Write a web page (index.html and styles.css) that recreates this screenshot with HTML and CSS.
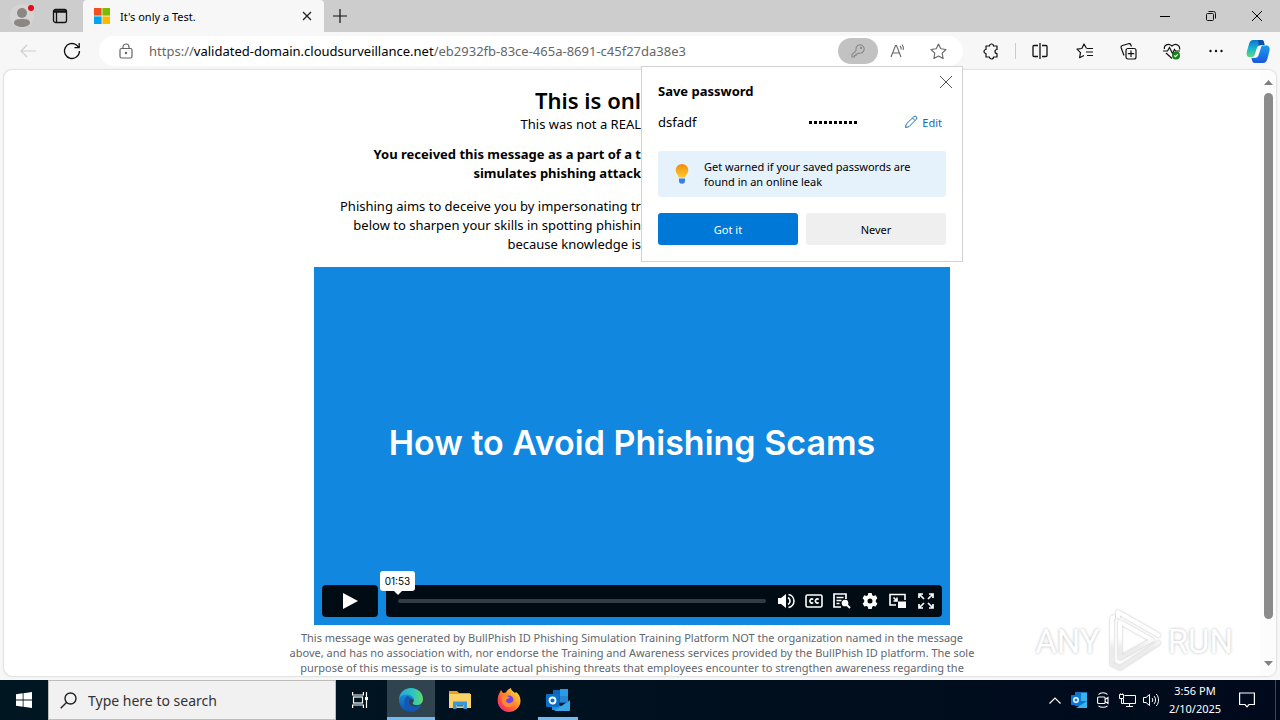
FILE: index.html
```html
<!DOCTYPE html>
<html lang="en">
<head>
<meta charset="UTF-8" />
<meta name="viewport" content="width=device-width, initial-scale=1" />
<title>It's only a Test.</title>
<link rel="stylesheet" href="styles.css">
</head>
<body>
  <header class="titlebar">
    <button class="profile-btn" aria-label="Profile">
      <svg width="28" height="28" viewBox="0 0 28 28"><circle cx="14" cy="14" r="12" fill="#d6d4d2"/><circle cx="14" cy="11" r="5" fill="#8b8784"/><path d="M6 21c0-3.500 3-4 8-4s8 .5 8 4c0 2-4 4-8 4s-8-2-8-4z" fill="#8b8784"/><circle cx="23" cy="6" r="3" fill="#e00b1c"/></svg>
    </button>
    <button class="tab-menu-btn" aria-label="Tab actions">
      <svg width="16" height="16" viewBox="0 0 16 16" fill="none" stroke="#111" stroke-width="1.3"><rect x="1.5" y="1.5" width="13" height="13" rx="2"/><path d="M1.5 3h13M1.5 4.2h13M4.5 4.5v10" /></svg>
    </button>
    <div class="tab">
      <svg width="16" height="16" viewBox="0 0 16 16"><path fill="#f25022" d="M0 0h7.6v7.6H0z"/><path fill="#7fba00" d="M8.4 0H16v7.6H8.4z"/><path fill="#00a4ef" d="M0 8.4h7.6V16H0z"/><path fill="#ffb900" d="M8.4 8.4H16V16H8.4z"/></svg>
      <span class="tab-title">It's only a Test.</span>
      <button class="tab-close" aria-label="Close tab"><svg width="10" height="10" viewBox="0 0 10 10" stroke="#222" stroke-width="1.3"><path d="M1 1l8 8M9 1l-8 8"/></svg></button>
    </div>
    <button class="new-tab" aria-label="New tab"><svg width="14" height="14" viewBox="0 0 14 14" stroke="#111" stroke-width="1.2"><path d="M7 0v14M0 7h14"/></svg></button>
    <div class="window-btns">
      <button aria-label="Minimize"><svg width="10" height="10" viewBox="0 0 10 10" stroke="#000"><path d="M0 5.5h10"/></svg></button>
      <button aria-label="Restore"><svg width="12" height="12" viewBox="0 0 12 12" fill="none" stroke="#111"><rect x="1.5" y="3.5" width="7" height="7" rx="1"/><path d="M3.5 1.5h5a2 2 0 0 1 2 2v5"/></svg></button>
      <button aria-label="Close"><svg width="12" height="12" viewBox="0 0 12 12" stroke="#000"><path d="M1 1l10 10M11 1L1 11"/></svg></button>
    </div>
  </header>

  <nav class="toolbar">
    <button class="tool-btn" aria-label="Back" disabled><svg width="16" height="14" viewBox="0 0 16 14" fill="none" stroke="#cfcfcf" stroke-width="1.2"><path d="M16 7H1M7 1L1 7l6 6"/></svg></button>
    <button class="tool-btn" aria-label="Refresh"><svg width="18" height="18" viewBox="0 0 18 18" fill="none" stroke="#111" stroke-width="1.3"><path d="M16.500 9A7.500 7.500 0 1 1 13.500 3l2.500 2.500M16.200 1v4.700h-4.700"/></svg></button>
    <div class="address-wrap">
      <div class="address-bar">
        <svg width="14" height="16" viewBox="0 0 14 16" fill="none" stroke="#666" stroke-width="1.2"><rect x="1" y="5.500" width="12" height="9.500" rx="1.500"/><path d="M4 5.500V4a3 3 0 0 1 6 0v1.500"/><circle cx="7" cy="10" r=".6" fill="#666"/></svg>
        <div class="url">https://<b>validated-domain.cloudsurveillance.net</b>/eb2932fb-83ce-465a-8691-c45f27da38e3</div>
        <button class="addr-btn key-btn" aria-label="Passwords"><svg width="14" height="14" viewBox="0 0 14 14" fill="none" stroke="#888" stroke-width="1.100"><path d="M9 .8a4.200 4.200 0 1 1-1.300 8.200L6.500 10H5v1.500H3.500V13H1v-2.500l4.200-4.200A4.200 4.200 0 0 1 9 .8z"/><circle cx="10" cy="4" r=".6"/></svg></button>
        <button class="addr-btn" aria-label="Read aloud"><svg width="16" height="16" viewBox="0 0 16 16" fill="none" stroke="#666" stroke-width="1.100"><path d="M1 14L5.500 2.500h1L11 14M2.600 10h6.800M10 3c1 1 1.300 2.300 1.100 3.600M12 1.500c1.300 1.500 1.700 3.500 1.300 5.300"/></svg></button>
        <button class="addr-btn" aria-label="Add to favorites"><svg width="17" height="17" viewBox="0 0 17 17" fill="none" stroke="#666" stroke-width="1.100" stroke-linejoin="round"><path d="M8.500 1l2.300 4.800 5.200.7-3.800 3.700.9 5.300-4.600-2.500-4.600 2.500.9-5.300L1 6.500l5.200-.7z"/></svg></button>
      </div>

      <section class="password-popup">
        <button class="popup-close" aria-label="Close"><svg width="12" height="12" viewBox="0 0 12 12" stroke="#555"><path d="M0 0l12 12M12 0L0 12"/></svg></button>
        <h2>Save password</h2>
        <div class="credentials">
          <span class="user">dsfadf</span>
          <span class="dots"><i></i><i></i><i></i><i></i><i></i><i></i><i></i><i></i><i></i><i></i></span>
          <button class="edit-btn"><svg width="14" height="14" viewBox="0 0 14 14" fill="none" stroke="#1a72bd"><path d="M1.500 12.500l.8-3.500 7.500-7.300a1.600 1.600 0 0 1 2.500 2.500L5 11.700zM8.500 3l2.500 2.500"/></svg>Edit</button>
        </div>
        <div class="leak-tip">
          <svg width="14" height="20" viewBox="0 0 14 20"><defs><linearGradient id="bulb" x2="0" y2="1"><stop stop-color="#f28a0c"/><stop offset="1" stop-color="#ffcb2e"/></linearGradient></defs><path fill="url(#bulb)" d="M7 0a6.300 6.300 0 0 1 6.300 6.300c0 3.200-2.600 4.300-3 7.200H3.700C3.300 10.600.7 9.500.7 6.300A6.300 6.300 0 0 1 7 0z"/><path fill="#3d7be5" d="M4 14.500h6v2.200a3 3 0 0 1-6 0z"/></svg>
          <p>Get warned if your saved passwords are found in an online leak</p>
        </div>
        <div class="popup-actions">
          <button class="primary">Got it</button>
          <button>Never</button>
        </div>
      </section>
    </div>
    <button class="tool-btn" aria-label="Extensions"><svg width="17" height="17" viewBox="0 0 17 17" fill="none" stroke="#111" stroke-width="1.200" stroke-linejoin="round"><path d="M3 3h3.500a2 2 0 0 1 4 0H14v3.500a1.900 1.900 0 0 0 0 4V14h-3.500a2 2 0 0 1-4 0H3v-3.500a2 2 0 1 1 0-4z"/></svg></button>
    <span class="tool-sep"></span>
    <button class="tool-btn" aria-label="Split screen"><svg width="16" height="16" viewBox="0 0 16 16" fill="none" stroke="#111" stroke-width="1.300"><path d="M6 2.500H2a1 1 0 0 0-1 1v9a1 1 0 0 0 1 1h4M10 2.500h4a1 1 0 0 1 1 1v9a1 1 0 0 1-1 1h-4M8 0v16"/></svg></button>
    <button class="tool-btn" aria-label="Favorites"><svg width="17" height="16" viewBox="0 0 17 16" fill="none" stroke="#111" stroke-width="1.200" stroke-linejoin="round"><path d="M10.500 5.500L8 1 5.800 5.500 1 6.200l3.500 3.500-.9 5L8 12.500M11 5.500h6M10 9h7M11 12.500h6"/></svg></button>
    <button class="tool-btn" aria-label="Collections"><svg width="17" height="17" viewBox="0 0 17 17" fill="none" stroke="#111" stroke-width="1.200"><rect x="6" y="5.500" width="10" height="10.500" rx="2"/><path d="M11 7.500v6.500M7.800 10.700h6.400M4 12.500L1.200 5a2 2 0 0 1 1.200-2.500l6-1.800a2 2 0 0 1 2.500 1.300l.5 1.500"/></svg></button>
    <button class="tool-btn" aria-label="Browser essentials"><svg width="18" height="17" viewBox="0 0 18 17" fill="none" stroke="#111" stroke-width="1.200"><path d="M1.500 6C.5 2.500 5-.5 9 3c4-3.500 8.500-.5 7.500 3.500M0 8h4.500L6.500 4.500l3 6 2-4 1 1.500H17M3 10l6 5.500"/><circle cx="13" cy="12.500" r="4" fill="#138013" stroke="none"/><path stroke="#fff" d="M11.200 12.500l1.300 1.200 2.300-2.400"/></svg></button>
    <button class="tool-btn" aria-label="Settings and more"><svg width="14" height="4" viewBox="0 0 14 4" fill="#111"><circle cx="1.500" cy="2" r="1.200"/><circle cx="7" cy="2" r="1.200"/><circle cx="12.500" cy="2" r="1.200"/></svg></button>
    <button class="tool-btn copilot-btn" aria-label="Copilot">
      <svg width="24" height="23" viewBox="0 0 24 23"><defs><linearGradient id="cpA" x2="0" y2="1"><stop stop-color="#0c73d4"/><stop offset=".5" stop-color="#16b6cd"/><stop offset="1" stop-color="#63d77b"/></linearGradient><linearGradient id="cpB" x2="0" y2="1"><stop stop-color="#1c9cea"/><stop offset="1" stop-color="#1a58e4"/></linearGradient></defs><path fill="url(#cpA)" d="M7 0h8c3 0 3 2 3.500 5h-3c-3 0-4 1-5 4l-2 6.500C8 17 7 17 5 17H4c-3 0-4-2-3-6l2-7C4 1 5 0 7 0z"/><path fill="url(#cpB)" d="M17 5.500h3c3 0 4 2 3.500 5l-2 8c-1 3-2 4.500-4.500 4.500H9c-2.500 0-3-2-3.500-5H8c3 0 4-1 5-4l2-6.500c.4-1.500.8-2 2-2z"/><path fill="#0e4fa8" d="M12 0h3c3 0 3 2 3.500 5h-3c-1 0-2 .2-2.700.7z"/></svg>
    </button>
  </nav>

  <main class="viewport">
    <article class="content">
      <div class="intro">
        <h1>This is onl</h1>
        <p>This was not a REAL</p>
        <p class="notice">You received this message as a part of a t<br>simulates phishing attack</p>
        <p class="about">Phishing aims to deceive you by impersonating tr<br>below to sharpen your skills in spotting phishin<br>because knowledge is</p>
      </div>

      <div class="video">
        <div class="video-title">How to Avoid Phishing Scams</div>
        <div class="controls">
          <button class="play" aria-label="Play"><svg width="16" height="16" viewBox="0 0 16 16"><path fill="#fff" d="M1 0l15 8-15 8z"/></svg></button>
          <div class="control-bar">
            <span class="time-tip">01:53</span>
            <input class="seek" type="range" min="0" max="113" value="0" aria-label="Seek">
            <button aria-label="Volume"><svg width="18" height="16" viewBox="0 0 18 16" fill="none" stroke="#fff" stroke-width="1.600"><path fill="#fff" stroke="none" d="M1 5h3l5-4v14l-5-4H1z"/><path d="M11 4.500a4 4 0 0 1 0 7M11.500 1.500a6.600 6.600 0 0 1 0 13"/></svg></button>
            <button aria-label="Captions"><svg width="18" height="14" viewBox="0 0 18 14" fill="none" stroke="#fff" stroke-width="1.600"><rect x="1" y="1" width="16" height="12" rx="1.500"/><path d="M8.200 5.500a2 2 0 1 0 0 3M13.700 5.500a2 2 0 1 0 0 3"/></svg></button>
            <button aria-label="Transcript"><svg width="18" height="16" viewBox="0 0 18 16" fill="none" stroke="#fff" stroke-width="1.700"><path d="M8 14H1V1h12v5M3.500 4.500h7M3.500 7.500h5M3.500 10.500h3"/><circle cx="12" cy="10" r="2.500" fill="#fff"/><path stroke-width="2" d="M13 11l4 4"/></svg></button>
            <button aria-label="Settings"><svg width="16" height="16" viewBox="0 0 16 16"><path fill="#fff" fill-rule="evenodd" d="M6.300 0h3.400l.5 2.200 1.300.8 2.200-.8 1.700 3L13.800 7v2l1.600 1.600-1.700 3-2.200-.7-1.300.8-.5 2.300H6.300l-.5-2.300-1.300-.8-2.200.7-1.700-3L2.200 9V7L.6 5.200l1.700-3 2.200.8 1.300-.8zM8 5.500a2.500 2.500 0 1 0 0 5 2.500 2.500 0 0 0 0-5z"/></svg></button>
            <button aria-label="Picture in picture"><svg width="18" height="16" viewBox="0 0 18 16" fill="none" stroke="#fff" stroke-width="1.600"><path d="M7 12H1V1.500h15V7M4.500 4.500l3 3M8 4.500v3.500H4.500"/><path fill="#fff" stroke="none" d="M9 8.500h8V15H9z"/></svg></button>
            <button aria-label="Fullscreen"><svg width="16" height="16" viewBox="0 0 16 16" fill="none" stroke="#fff" stroke-width="1.700"><path d="M1 5V1h4M11 1h4v4M15 11v4h-4M5 15H1v-4M1 1l5 5M15 1l-5 5M15 15l-5-5M1 15l5-5"/></svg></button>
          </div>
        </div>
      </div>

      <p class="disclaimer">This message was generated by BullPhish ID Phishing Simulation Training Platform NOT the organization named in the message<br>above, and has no association with, nor endorse the Training and Awareness services provided by the BullPhish ID platform. The sole<br>purpose of this message is to simulate actual phishing threats that employees encounter to strengthen awareness regarding the</p>
    </article>
    <div class="scrollbar">
      <svg width="9" height="5" viewBox="0 0 9 5"><path fill="#808080" d="M0 5l4.500-5L9 5z"/></svg>
      <span class="thumb"></span>
      <svg width="9" height="5" viewBox="0 0 9 5"><path fill="#808080" d="M0 0h9L4.500 5z"/></svg>
    </div>
    <div class="watermark">
      <span>ANY</span>
      <svg width="60" height="66" viewBox="0 0 60 66" fill="none" stroke-width="4" stroke-linejoin="round"><defs><linearGradient id="wm" gradientUnits="userSpaceOnUse" x1="0" y1="0" x2="0" y2="66"><stop offset=".45" stop-color="#fff"/><stop offset=".6" stop-color="#ececec"/></linearGradient></defs><g stroke="url(#wm)"><path d="M16 14v36l32-18z"/><path d="M8 58V12c0-2 1-3 3-3M14 10V4l42 24M56 34L16 60l-6-3"/></g></svg>
      <span>RUN</span>
    </div>
  </main>

  <footer class="taskbar">
    <button class="start" aria-label="Start"><svg width="16" height="16" viewBox="0 0 16 16" fill="#fff"><path d="M0 2.300L6.700 1.300v6.300H0zM7.500 1.200L16 0v7.600H7.500zM0 8.400h6.700v6.300L0 13.700zM7.500 8.400H16V16l-8.500-1.200z"/></svg></button>
    <label class="search">
      <svg width="17" height="17" viewBox="0 0 17 17" fill="none" stroke="#222" stroke-width="1.400"><circle cx="10.500" cy="6.500" r="5.500"/><path d="M6.500 10.500L.7 16.300"/></svg>
      <input type="text" placeholder="Type here to search" aria-label="Search">
    </label>
    <div class="apps">
      <button aria-label="Task view"><svg width="17" height="16" viewBox="0 0 17 16" fill="none" stroke="#fff" stroke-width="1.200"><path d="M.6 0v3h10.800V0M.6 16v-3h10.800v3M14.500 0v16"/><rect x="1.500" y="5" width="9" height="6"/><path fill="#fff" stroke="none" d="M13 5h3v3h-3z"/></svg></button>
      <button class="active" aria-label="Edge"><svg width="24" height="24" viewBox="0 0 24 24"><defs><linearGradient id="edgeA"><stop stop-color="#2aa5dd"/><stop offset=".6" stop-color="#2fc6bd"/><stop offset="1" stop-color="#64d867"/></linearGradient><linearGradient id="edgeB" x2="0" y2="1"><stop stop-color="#1c8fd8"/><stop offset="1" stop-color="#0d4fa5"/></linearGradient></defs><path fill="url(#edgeB)" d="M0 12c0-5 5-7 9-6 4 0 6 3 6 6-4-3-6 0-5 3 1 4 7 5 12 2-2 4-6 7-10 7C5 24 0 19 0 12z"/><path fill="#1657b4" d="M8 8c-5 4-3 14 5 15.800C18 23 21 20 22 17c-5 3-11 2-12-2-1-2 0-4 2-4-1-2-2-3-4-3z"/><path fill="url(#edgeA)" d="M0 12C0 5 5 0 12 0s12 5 12 11c0 4-3 6-6 6-4 0-5-1-4-2.500 3-4-2-8.500-7-8-4 .3-7 2.500-7 5.500z"/></svg></button>
      <button aria-label="File Explorer"><svg width="22" height="18" viewBox="0 0 22 18"><path fill="#e9a21c" d="M0 0h8l2 2h11v4H0z"/><path fill="#fdd368" d="M0 3h22v14H0z"/><path fill="#3b95d6" d="M4 10.500h14V18h-3.500v-4h-7v4H4z"/><path fill="#287cb8" d="M8 14h6v1.500H8z"/></svg></button>
      <button aria-label="Firefox"><svg width="24" height="24" viewBox="0 0 24 24"><defs><linearGradient id="fox" x1="1" x2="0" y2="1"><stop stop-color="#fff04a"/><stop offset=".4" stop-color="#ff9a2b"/><stop offset=".7" stop-color="#ff4a45"/><stop offset="1" stop-color="#e3189a"/></linearGradient></defs><path fill="url(#fox)" d="M2 6l2-4 2 3 3-.5C10 2 12 1 14 0c0 3 3 3.500 4 5l1-1c3 2 4.500 5 4.500 9C23.500 19 18 24 12 24S.7 19 .7 13C.7 10 1 8 2 6z"/><circle cx="12" cy="12" r="4.500" fill="#7543e5"/><path fill="#ff8a2d" d="M5 8c3-1 6 0 8 2-2 0-3 1-4 2 0 4 5 4 7 1 1 5-3 7-6 6-4-1-6-5-5-11z"/></svg></button>
      <button class="running" aria-label="Outlook"><svg width="24" height="22" viewBox="0 0 24 22"><path fill="#1066b5" d="M7 1h15v13H7z"/><path fill="#2a9be8" d="M14 0h8v7h-8z"/><path fill="#2b84d0" d="M14 7h8v6h-8z"/><path fill="#185fa8" d="M7 7h7v7H7z"/><path fill="#1c91dd" d="M6 13l9 4 9-6v10H6z"/><path fill="#3aa8e4" d="M8 22l16-10v9a1 1 0 0 1-1 1z"/><rect y="5" width="13" height="13" rx="1" fill="#0b6fc8"/><circle cx="6.500" cy="11.500" r="3" fill="none" stroke="#fff" stroke-width="1.800"/></svg></button>
    </div>
    <div class="tray">
      <button aria-label="Show hidden icons"><svg width="12" height="7" viewBox="0 0 12 7" fill="none" stroke="#fff" stroke-width="1.200"><path d="M.5 6.500L6 1l5.500 5.500"/></svg></button>
      <button aria-label="Outlook"><svg width="16" height="16" viewBox="0 0 16 16"><path fill="#1272c4" d="M4 0h12v14H4z"/><path fill="#35b4f0" d="M10 1h6v8h-6zM5 16l11-7v7z"/><rect y="3" width="10" height="10" rx="1" fill="#0a78d4"/><circle cx="5" cy="8" r="2.200" fill="none" stroke="#fff" stroke-width="1.400"/></svg></button>
      <button aria-label="Meet now"><svg width="12" height="16" viewBox="0 0 12 16" fill="none" stroke="#fff" stroke-width="1.100"><rect x=".6" y="5" width="7.500" height="6.500" rx="1"/><path d="M8 7.500l3-2v6l-3-2M1.500 2.500c2-2.300 7-2.300 9 0M1.500 13.800c2 2 7 2 9 0"/></svg></button>
      <button aria-label="Network"><svg width="17" height="15" viewBox="0 0 17 15" fill="none" stroke="#fff"><path d="M5.500 2.500h11v8h-12V6M10.500 10.500v3M7 13.500h7M2.500 5.500v5h2"/><path d="M.5 1.500h4v4h-4zM1.500.5v1M3.500.5v1"/></svg></button>
      <button aria-label="Volume"><svg width="17" height="14" viewBox="0 0 17 14" fill="none" stroke="#fff"><path d="M.5 4.500h2.500L6.500 1.500v11L3 9.500H.5zM9 5c1 1.200 1 2.800 0 4M11 3c2 2.300 2 5.700 0 8M13.300 1c3 3.500 3 8.500 0 12"/></svg></button>
      <div class="clock"><span>3:56 PM</span><span>2/10/2025</span></div>
      <button class="notify" aria-label="Notifications"><svg width="16" height="16" viewBox="0 0 16 16" fill="none" stroke="#fff" stroke-width="1.200"><path d="M.6 1h14.800v11.500H10L8 14.800l-2-2.300H.6z"/></svg></button>
      <span class="show-desktop"></span>
    </div>
  </footer>
</body>
</html>
```
FILE: styles.css
```css
* {
  box-sizing: border-box;
}
body {
  margin: 0;
  height: 100vh;
  display: flex;
  flex-direction: column;
  overflow: hidden;
  background: #f7f7f7;
  color: #000;
  font-family: "Noto Sans", "Open Sans", sans-serif;
  font-size: 11px;
}
button {
  display: flex;
  align-items: center;
  justify-content: center;
  padding: 0;
  border: none;
  background: none;
  color: inherit;
  font: inherit;
}
svg {
  flex: none;
}
h1, h2, p {
  margin: 0;
}

/* window title bar */
.titlebar {
  flex: none;
  display: flex;
  height: 32px;
  background: #cdcdcd;
}
.profile-btn {
  width: 44px;
}
.tab-menu-btn {
  width: 32px;
}
.tab {
  display: flex;
  align-items: center;
  width: 241px;
  margin-left: 7px;
  padding: 0 12px 0 11px;
  gap: 10px;
  background: #f7f7f7;
  border-radius: 4px 4px 0 0;
}
.tab-title {
  flex: 1;
}
.new-tab {
  width: 32px;
}
.window-btns {
  display: flex;
  margin-left: auto;
}
.window-btns button {
  width: 46px;
}

/* toolbar */
.toolbar {
  flex: none;
  display: flex;
  align-items: center;
  height: 38px;
  padding: 0 2px 0 6px;
}
.tool-btn {
  width: 44px;
  height: 32px;
}
.copilot-btn {
  width: 40px;
}
.tool-sep {
  width: 1px;
  height: 16px;
  margin: 0 2px;
  background: #ccc;
}
.address-wrap {
  position: relative;
  flex: 1;
  min-width: 0;
  margin: 0 6px 0 5px;
}
.address-bar {
  display: flex;
  align-items: center;
  height: 30px;
  padding: 0 5px 0 20px;
  background: #fff;
  border-radius: 15px;
}
.url {
  flex: 1;
  margin-left: 16px;
  color: #666;
  font-size: 13px;
  white-space: nowrap;
}
.url b {
  color: #000;
  font-weight: 400;
}
.addr-btn {
  width: 40px;
  height: 26px;
  border-radius: 13px;
}
.key-btn {
  background: #c2c2c2;
}

/* save password popup */
.password-popup {
  position: absolute;
  z-index: 2;
  top: 30px;
  right: 0;
  width: 322px;
  padding: 15px 16px 16px;
  background: #fff;
  border: 1px solid #d2d2d2;
}
.popup-close {
  position: absolute;
  top: 3px;
  right: 4px;
  width: 24px;
  height: 24px;
}
.password-popup h2 {
  font-size: 13px;
  line-height: 18px;
}
.credentials {
  display: flex;
  align-items: center;
  height: 44px;
  font-size: 13px;
}
.user {
  width: 151px;
}
.dots {
  display: flex;
  gap: 2px;
}
.dots i {
  width: 3px;
  height: 3px;
  background: #000;
}
.edit-btn {
  margin-left: auto;
  padding-right: 4px;
  gap: 4px;
  color: #0f69b6;
  font-size: 11px;
}
.leak-tip {
  display: flex;
  align-items: center;
  gap: 15px;
  margin-top: 7px;
  padding: 8px 17px;
  background: #e5f1fb;
  border-radius: 3px;
  line-height: 15px;
}
.popup-actions {
  display: flex;
  gap: 8px;
  margin-top: 16px;
}
.popup-actions button {
  flex: 1;
  height: 32px;
  background: #efefef;
  border-radius: 3px;
}
.popup-actions .primary {
  background: #0078d7;
  color: #fff;
}

/* page */
.viewport {
  position: relative;
  flex: 1;
  min-height: 0;
  display: flex;
  margin: 0 4px 4px;
  overflow: hidden;
  background: #fff;
  border-radius: 8px;
  box-shadow: 0 0 2px #aaa;
}
.content {
  flex: 1;
  padding-top: 15px;
}
.intro {
  width: 50%;
  margin-left: 9px;
  font-size: 13px;
  line-height: 19px;
  text-align: right;
}
.intro h1 {
  font-size: 22px;
  font-weight: 600;
  line-height: 30px;
}
.notice {
  margin-top: 11px;
  font-weight: 700;
}
.about {
  margin-top: 14px;
}
.video {
  display: flex;
  flex-direction: column;
  width: 636px;
  aspect-ratio: 16 / 9;
  margin: 13px auto 5px;
  padding: 0 8px 8px;
  background: #1287e0;
  color: #fff;
}
.video-title {
  flex: 1;
  display: flex;
  align-items: center;
  justify-content: center;
  padding-top: 34px;
  font-family: Inter, sans-serif;
  font-size: 34px;
  font-weight: 600;
}
.controls {
  display: flex;
  gap: 8px;
}
.play {
  width: 56px;
  height: 32px;
  background: #000b14;
  border-radius: 4px;
}
.control-bar {
  position: relative;
  flex: 1;
  display: flex;
  align-items: center;
  height: 32px;
  padding: 0 2px 0 12px;
  background: #000b14;
  border-radius: 4px;
}
.control-bar button {
  width: 28px;
}
.seek {
  flex: 1;
  min-width: 0;
  height: 4px;
  margin: 0 6px 0 0;
  appearance: none;
  background: #333c43;
  border-radius: 2px;
}
.seek::-webkit-slider-thumb {
  appearance: none;
  width: 1px;
  height: 4px;
}
.time-tip {
  position: absolute;
  left: -6px;
  bottom: 26px;
  width: 35px;
  background: #fff;
  border-radius: 3px;
  color: #000;
  font-family: Inter, sans-serif;
  font-size: 10px;
  line-height: 20px;
  text-align: center;
}
.time-tip::after {
  content: "";
  position: absolute;
  top: 100%;
  left: 14px;
  border: 4px solid transparent;
  border-top-color: #fff;
  border-bottom: none;
}
.disclaimer {
  color: #5f666d;
  line-height: 15px;
  text-align: center;
}
.scrollbar {
  display: flex;
  flex-direction: column;
  align-items: center;
  width: 16px;
  padding: 10px 0;
  gap: 8px;
  background: #fcfcfc;
}
.thumb {
  flex: 1;
  width: 9px;
  margin-bottom: 34px;
  background: #8b8b8b;
  border-radius: 5px;
}
.watermark {
  position: absolute;
  right: 43px;
  bottom: 2px;
  display: flex;
  align-items: center;
  gap: 4px;
  color: #fff;
  font-family: Roboto, sans-serif;
  font-size: 33px;
  text-shadow: 0 0 3px #b5b5b5;
}
.watermark svg {
  filter: drop-shadow(0 0 1px #bbb);
}

/* taskbar */
.taskbar {
  flex: none;
  display: flex;
  height: 40px;
  background: linear-gradient(to right, #001722, #000a1c);
  color: #fff;
}
.start {
  width: 48px;
}
.search {
  display: flex;
  align-items: center;
  width: 288px;
  padding-left: 11px;
  gap: 11px;
  background: #f1f1f1;
  border: 1px solid #bbb;
}
.search input {
  flex: 1;
  min-width: 0;
  padding: 0;
  border: none;
  outline: none;
  background: none;
  font: inherit;
  font-size: 14px;
}
.search input::placeholder {
  color: #333;
}
.apps {
  display: flex;
  gap: 1px;
}
.apps button {
  position: relative;
  width: 48px;
}
.apps .active {
  margin-left: 2px;
  background: #30444f;
}
.apps .active::after, .apps .running::after {
  content: "";
  position: absolute;
  left: 0;
  right: 0;
  bottom: 0;
  height: 3px;
  background: #76b9ed;
}
.apps .running::after {
  left: 4px;
  right: 4px;
}
.tray {
  display: flex;
  align-items: center;
  margin-left: auto;
}
.tray button {
  width: 24px;
  height: 40px;
}
.clock {
  display: flex;
  flex-direction: column;
  align-items: center;
  width: 64px;
  line-height: 18px;
}
.tray .notify {
  width: 40px;
}
.show-desktop {
  width: 1px;
  height: 40px;
  margin: 0 4px 0 8px;
  background: #3c4754;
}
```
